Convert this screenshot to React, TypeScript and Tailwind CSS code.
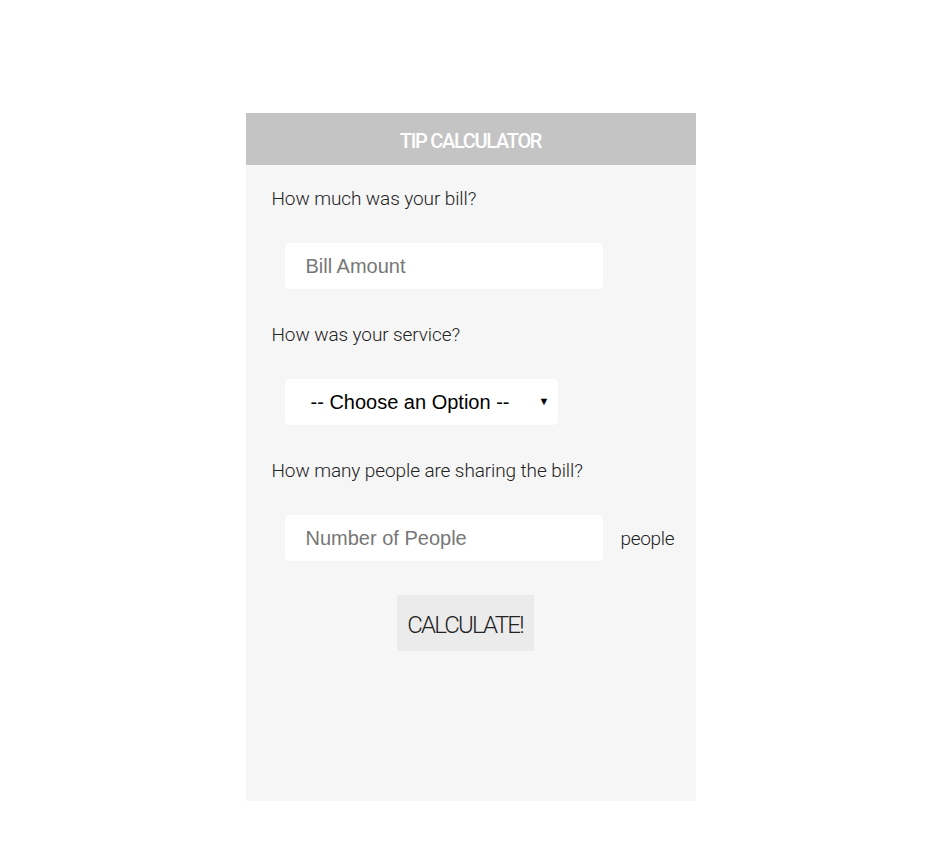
export default function App() {
  const thin = { fontFamily: "Roboto, 'Open Sans', sans-serif" };
  return (
    <div className="min-h-[868px] w-full bg-white pt-[113px]">
      <div className="mx-auto flex h-[688px] w-[450px] flex-col bg-[#f6f6f6]" style={thin}>
        <div className="flex h-[52px] items-center justify-center bg-[#c4c4c4] pt-[4px]">
          <h1 className="text-[20px] font-medium tracking-[-1.3px] text-white">TIP CALCULATOR</h1>
        </div>
        <div className="flex flex-col px-[26px]">
          <p className="mt-[22px] text-[19px] font-light leading-[24px] tracking-[-0.1px] text-[#222]">
            How much was your bill?
          </p>
          <input
            placeholder="Bill Amount"
            className="ml-[13px] mt-[32px] h-[46px] w-[318px] rounded-[5px] bg-white pl-[21px] text-[20px] outline-none placeholder:text-[#777]"
            style={{ fontFamily: "'Liberation Sans', Arial, sans-serif" }}
          />
          <p className="mt-[34px] text-[19px] font-light leading-[24px] tracking-[-0.1px] text-[#222]">
            How was your service?
          </p>
          <div className="relative ml-[13px] mt-[32px] h-[46px] w-[273px]">
            <select
              className="h-full w-full appearance-none rounded-[5px] bg-white pl-[26px] text-[20px] text-black outline-none"
              style={{ fontFamily: "'Liberation Sans', Arial, sans-serif" }}
            >
              <option>-- Choose an Option --</option>
            </select>
            <span className="pointer-events-none absolute right-[8px] top-[15px] text-[11px] text-black">▼</span>
          </div>
          <p className="mt-[34px] text-[19px] font-light leading-[24px] tracking-[-0.1px] text-[#222]">
            How many people are sharing the bill?
          </p>
          <div className="ml-[13px] mt-[32px] flex items-center">
            <input
              placeholder="Number of People"
              className="h-[46px] w-[318px] shrink-0 rounded-[5px] bg-white pl-[21px] text-[20px] outline-none placeholder:text-[#777]"
              style={{ fontFamily: "'Liberation Sans', Arial, sans-serif" }}
            />
            <span className="ml-[18px] mt-[2px] text-[19px] font-light tracking-[-0.3px] text-[#222]">people</span>
          </div>
          <div className="mr-[11px] mt-[34px] flex justify-center">
            <button className="h-[56px] w-[137px] bg-[#ebebeb] pt-[3px] text-[24px] font-light tracking-[-1.8px] text-[#222]">
              CALCULATE!
            </button>
          </div>
        </div>
      </div>
    </div>
  );
}
